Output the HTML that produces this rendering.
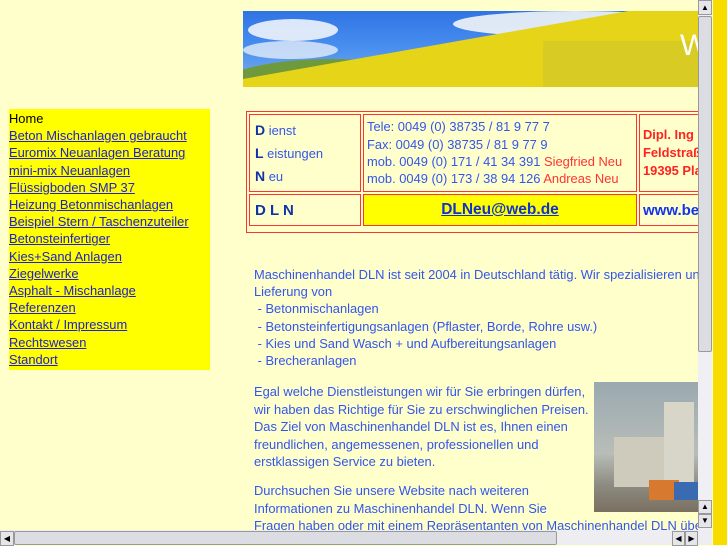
<!DOCTYPE html>
<html><head><meta charset="utf-8"><style>
body{margin:0;width:727px;height:545px;overflow:hidden;background:#ffffcc;font-family:"Liberation Sans",sans-serif;position:relative}
.a{position:absolute}
#menu{left:9px;top:109px;width:201px;height:260px;background:#ffff00;font-size:12.9px;line-height:17.2px;padding-top:1px}
#menu a{color:#2020cc;text-decoration:underline}
.b{color:#3355ee;font-size:12.9px}
td{border:1px solid #ff3333;vertical-align:middle}
</style></head><body>
<div class="a" style="left:243px;top:11px;width:455px;height:76px;overflow:hidden;background:linear-gradient(180deg,#2f74e4 0%,#4a90f0 50%,#7fb0e8 100%)">
<div class="a" style="left:5px;top:8px;width:90px;height:22px;background:#eef3fb;border-radius:50%;opacity:.9"></div>
<div class="a" style="left:0px;top:30px;width:95px;height:18px;background:#e4ecf8;border-radius:50%;opacity:.8"></div>
<div class="a" style="left:210px;top:0px;width:245px;height:26px;background:#f2f4f6;border-radius:50%;opacity:.9"></div>
<div class="a" style="left:-20px;top:48px;width:220px;height:50px;background:#6f9a3c;border-radius:50% 50% 0 0"></div>
<div class="a" style="left:-40px;top:75px;width:560px;height:70px;background:#e6d418;transform:rotate(-10deg);transform-origin:left top"></div>
<div class="a" style="left:300px;top:30px;width:160px;height:50px;background:#d8cc24"></div>
<div class="a" style="left:437px;top:18px;color:#fff;font-size:30px">W</div>
</div>
<div id="menu" class="a">
<div style="color:#000">Home</div>
<div><a>Beton Mischanlagen gebraucht</a></div>
<div><a>Euromix Neuanlagen Beratung</a></div>
<div><a>mini-mix Neuanlagen</a></div>
<div><a>Flüssigboden SMP 37</a></div>
<div><a>Heizung Betonmischanlagen</a></div>
<div><a>Beispiel Stern / Taschenzuteiler</a></div>
<div><a>Betonsteinfertiger</a></div>
<div><a>Kies+Sand Anlagen</a></div>
<div><a>Ziegelwerke</a></div>
<div><a>Asphalt - Mischanlage</a></div>
<div><a>Referenzen</a></div>
<div><a>Kontakt / Impressum</a></div>
<div><a>Rechtswesen</a></div>
<div><a>Standort</a></div>
</div>
<div class="a" style="left:246px;top:111px;width:452px;height:120px;border:1px solid #ff3333;border-right:none;overflow:hidden">
<table style="border-collapse:separate;border-spacing:2px;width:520px;font-size:12.9px;color:#3355ee">
<tr style="height:78px"><td style="width:104px;padding-left:5px;line-height:22px"><b style="color:#1133aa;font-size:14px">D</b> ienst<br><b style="color:#1133aa;font-size:14px">L</b> eistungen<br><b style="color:#1133aa;font-size:14px">N</b> eu</td>
<td style="width:268px;padding-left:3px;line-height:17.3px">Tele: 0049 (0) 38735 / 81 9 77 7<br>Fax: 0049 (0) 38735 / 81 9 77 9<br>mob. 0049 (0) 171 / 41 34 391 <span style="color:#ff3333">Siegfried Neu</span><br>mob. 0049 (0) 173 / 38 94 126 <span style="color:#ff3333">Andreas Neu</span></td>
<td style="padding-left:3px;color:#ff2222;font-weight:bold;line-height:18px">Dipl. Ing<br>Feldstraße<br>19395 Plau</td></tr>
<tr style="height:32px"><td style="padding-left:5px;color:#1133aa;font-weight:bold;font-size:15px">D L N</td>
<td style="background:#ffff00;text-align:center;font-weight:bold;font-size:15.5px"><a style="color:#1133cc;text-decoration:underline">DLNeu@web.de</a></td>
<td style="padding-left:3px;color:#1133ee;font-weight:bold;font-size:15px">www.beton</td></tr>
</table></div>
<div class="a b" style="left:254px;top:266px;width:444px;overflow:hidden;white-space:nowrap;line-height:17.2px">Maschinenhandel DLN ist seit 2004 in Deutschland tätig. Wir spezialisieren uns auf<br>Lieferung von<br>&nbsp;- Betonmischanlagen<br>&nbsp;- Betonsteinfertigungsanlagen (Pflaster, Borde, Rohre usw.)<br>&nbsp;- Kies und Sand Wasch + und Aufbereitungsanlagen<br>&nbsp;- Brecheranlagen</div>
<div class="a b" style="left:254px;top:383px;line-height:17.6px;white-space:nowrap">Egal welche Dienstleistungen wir für Sie erbringen dürfen,<br>wir haben das Richtige für Sie zu erschwinglichen Preisen.<br>Das Ziel von Maschinenhandel DLN ist es, Ihnen einen<br>freundlichen, angemessenen, professionellen und<br>erstklassigen Service zu bieten.</div>
<div class="a b" style="left:254px;top:482px;width:444px;overflow:hidden;line-height:17.6px;white-space:nowrap">Durchsuchen Sie unsere Website nach weiteren<br>Informationen zu Maschinenhandel DLN. Wenn Sie<br>Fragen haben oder mit einem Repräsentanten von Maschinenhandel DLN über</div>
<div class="a" style="left:594px;top:382px;width:104px;height:130px;background:linear-gradient(#9aa9b0,#b8bdb8 55%,#8c8a80 80%,#7a7060);overflow:hidden">
<div class="a" style="left:70px;top:20px;width:30px;height:90px;background:#d8d6c8"></div>
<div class="a" style="left:20px;top:55px;width:50px;height:50px;background:#cfcbbc"></div>
<div class="a" style="left:55px;top:98px;width:30px;height:20px;background:#d77a30"></div>
<div class="a" style="left:80px;top:100px;width:24px;height:18px;background:#3a6ab0"></div>
</div>
<div class="a" style="left:698px;top:0;width:14px;height:530px;background:#f0f0f4"></div>
<div class="a" style="left:698px;top:0;width:12px;height:13px;background:#e6e6ea;border:1px solid #999;font-size:8px;text-align:center;line-height:13px">▲</div>
<div class="a" style="left:698px;top:16px;width:12px;height:334px;background:#dcdde2;border:1px solid #999;border-radius:2px"></div>
<div class="a" style="left:698px;top:500px;width:12px;height:12px;background:#e6e6ea;border:1px solid #999;font-size:8px;text-align:center;line-height:12px">▲</div>
<div class="a" style="left:698px;top:514px;width:12px;height:12px;background:#e6e6ea;border:1px solid #999;font-size:8px;text-align:center;line-height:12px">▼</div>
<div class="a" style="left:0;top:530px;width:712px;height:15px;background:#eeeef2"></div>
<div class="a" style="left:0;top:531px;width:12px;height:13px;background:#e6e6ea;border:1px solid #999;font-size:8px;text-align:center;line-height:13px">◀</div>
<div class="a" style="left:14px;top:531px;width:541px;height:12px;background:#dcdde2;border:1px solid #999;border-radius:2px"></div>
<div class="a" style="left:672px;top:531px;width:11px;height:13px;background:#e6e6ea;border:1px solid #999;font-size:8px;text-align:center;line-height:13px">◀</div>
<div class="a" style="left:685px;top:531px;width:11px;height:13px;background:#e6e6ea;border:1px solid #999;font-size:8px;text-align:center;line-height:13px">▶</div>
<div class="a" style="left:713px;top:0;width:14px;height:545px;background:#f8dc00"></div>
</body></html>
